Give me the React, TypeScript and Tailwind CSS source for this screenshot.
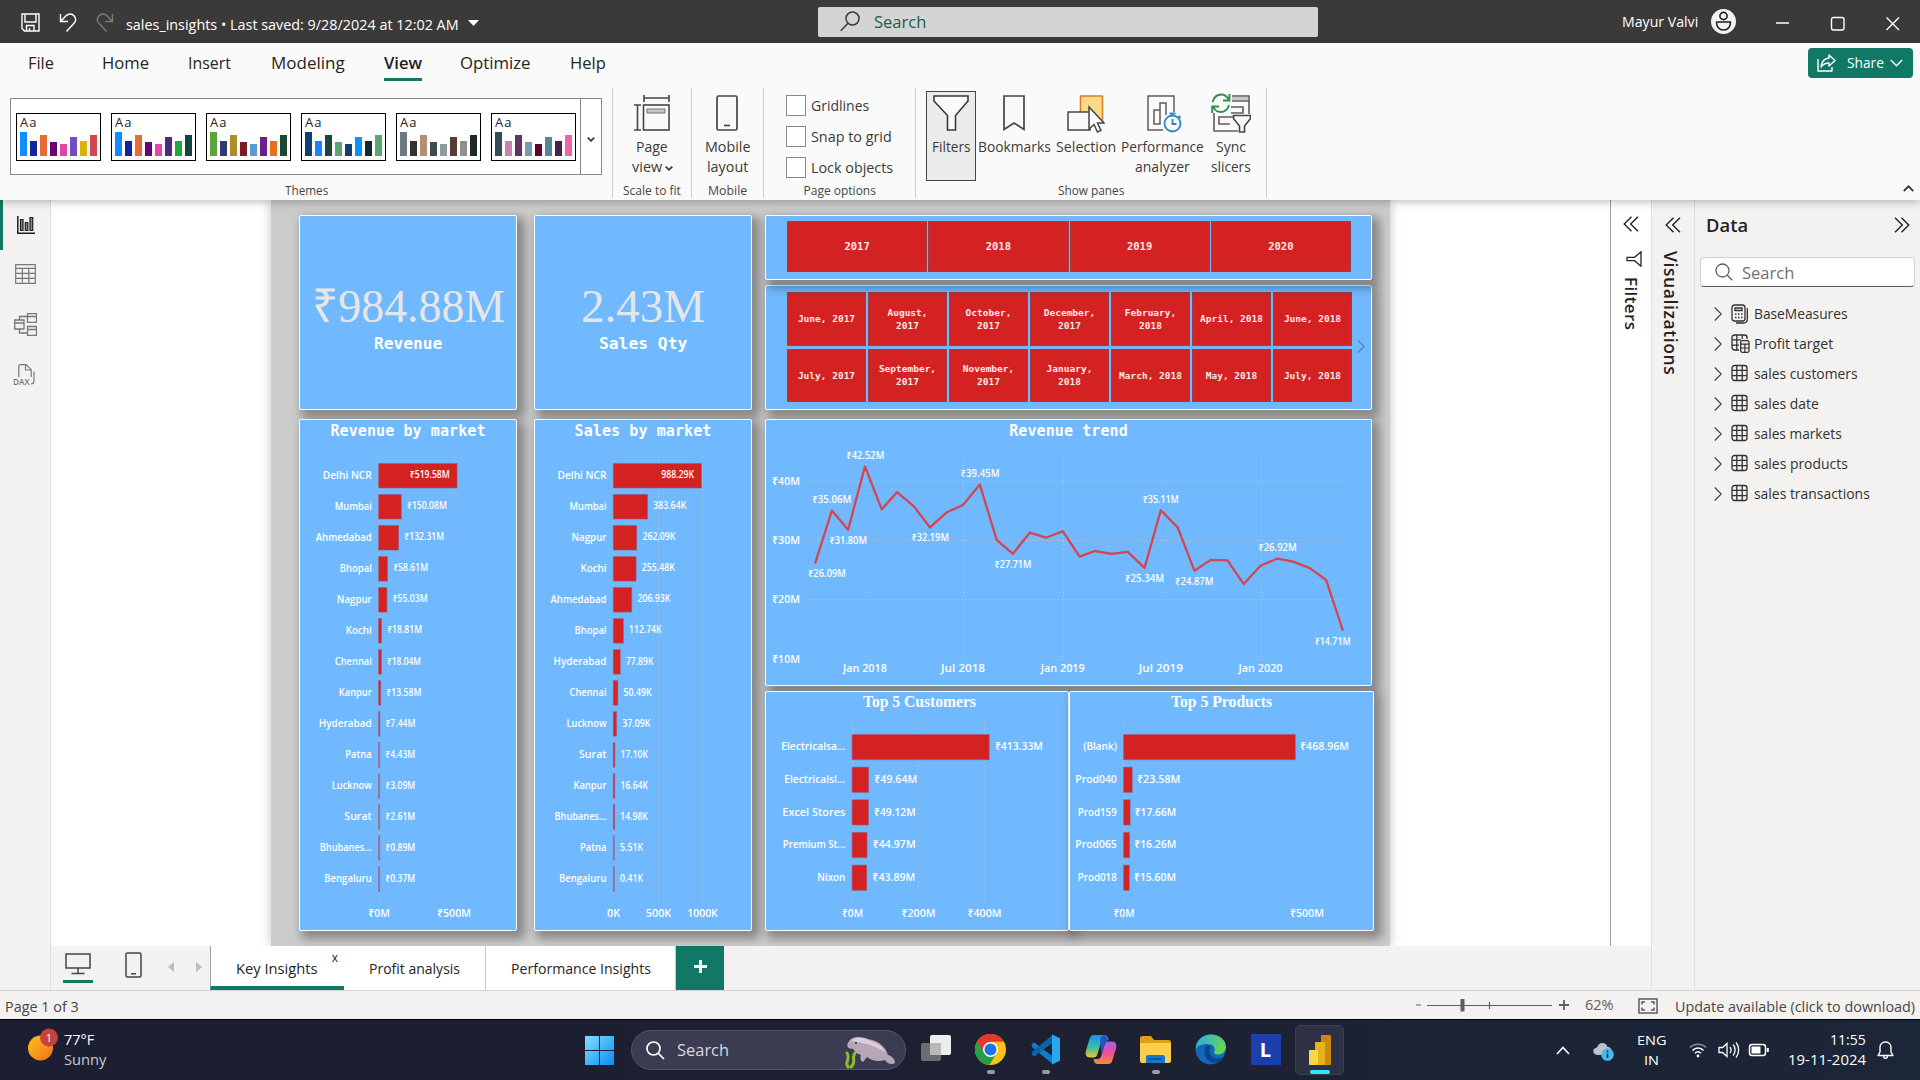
import { useLayoutEffect, useRef, useState, type ReactNode } from 'react';

/* Text that is condensed or widened to the width of its box. */
function Fit({ children, className = '' }: { children: ReactNode; className?: string }) {
  const outer = useRef<HTMLSpanElement>(null);
  const inner = useRef<HTMLSpanElement>(null);
  const [scale, setScale] = useState(1);
  useLayoutEffect(() => {
    if (outer.current && inner.current) {
      setScale(outer.current.clientWidth / inner.current.offsetWidth);
    }
  }, []);
  return (
    <span ref={outer} className={`block shrink-0 whitespace-nowrap ${className}`}>
      <span ref={inner} className="inline-block origin-left" style={{ transform: `scaleX(${scale})` }}>
        {children}
      </span>
    </span>
  );
}

/* ---------- title bar ---------- */

function TitleBar() {
  return (
    <header className="flex h-[43px] items-center bg-[#3b3a39] text-white">
      <svg className="ml-[21px] mt-[2px] shrink-0" width="19" height="19" viewBox="0 0 19 19" fill="none" stroke="#fff" strokeWidth="1.4">
        <path d="M1 1h17v17H3.5L1 15.500zM4 1v8h11V1M5.500 18v-5.500h7.500V18M8.500 15v3" />
      </svg>
      <svg className="ml-[19px] mt-[2px] shrink-0" width="18" height="20" viewBox="0 0 18 20" fill="none" stroke="#fff" strokeWidth="1.4">
        <path d="M1.500 1v7.500h7.500M1.800 8.200L7 2.700C9.500.3 13 .5 15 2.700s2 5.300 0 7.500L7.500 18.500" />
      </svg>
      <svg className="ml-[19px] mt-[2px] shrink-0" width="18" height="20" viewBox="0 0 18 20" fill="none" stroke="#7b7a79" strokeWidth="1.4">
        <path d="M16.500 1v7.500H9M16.200 8.200L11 2.700C8.500.3 5 .5 3 2.700s-2 5.300 0 7.500l7.500 8.300" />
      </svg>
      <Fit className="ml-[12px] mt-[6px] w-[333px] text-[14.5px]">sales_insights • Last saved: 9/28/2024 at 12:02 AM</Fit>
      <svg className="ml-[9px] mt-[3px] shrink-0" width="11" height="6" viewBox="0 0 11 6"><path d="M0 0h11L5.500 6z" fill="#fff" /></svg>
      <div className="ml-[339px] flex h-[30px] w-[500px] items-center rounded-[2px] bg-[#d4d4d2]">
        <svg className="ml-[22px]" width="20" height="21" viewBox="0 0 20 21" fill="none" stroke="#3b3a39" strokeWidth="1.500">
          <circle cx="12.500" cy="7.500" r="6.500" /><path d="M8 12.200L.8 19.800" />
        </svg>
        <Fit className="ml-[14px] mt-px w-[52px] text-[16.5px] text-[#1d5c50]">Search</Fit>
      </div>
      <Fit className="ml-[304px] mt-px w-[76px] text-[14.5px]">Mayur Valvi</Fit>
      <svg className="ml-[13px] shrink-0" width="25" height="25" viewBox="0 0 25 25">
        <circle cx="12.500" cy="12.500" r="12.500" fill="#f3f2f1" />
        <circle cx="12.500" cy="7" r="3.600" fill="none" stroke="#201f1e" strokeWidth="1.600" />
        <path d="M5.500 13h14c0 5-3 8-7 8s-7-3-7-8z" fill="none" stroke="#201f1e" strokeWidth="1.600" strokeLinejoin="round" />
      </svg>
      <svg className="ml-[40px] mt-[3px] shrink-0" width="124" height="15" viewBox="0 0 124 15" fill="none" stroke="#fff" strokeWidth="1.400">
        <path d="M0 7h13M110.500 1.500l12.500 12.500M123 1.500l-12.500 12.500" />
        <rect x="55.500" y="1.500" width="12.500" height="12.500" rx="2" />
      </svg>
    </header>
  );
}

/* ---------- ribbon ---------- */

const themeBars = ['h-[24px]', 'h-[15px]', 'h-[21px]', 'h-[14px]', 'h-[12px]', 'h-[19px]', 'h-[15px]', 'h-[21px]'];
const themes = [
  ['bg-[#118dff]', 'bg-[#12239e]', 'bg-[#e66c37]', 'bg-[#6b007b]', 'bg-[#e044a7]', 'bg-[#744ec2]', 'bg-[#d9b300]', 'bg-[#d64550]'],
  ['bg-[#118dff]', 'bg-[#12239e]', 'bg-[#e66c37]', 'bg-[#6b007b]', 'bg-[#e645ab]', 'bg-[#4c2c7a]', 'bg-[#1aab40]', 'bg-[#15433f]'],
  ['bg-[#5da33b]', 'bg-[#333a70]', 'bg-[#ad8f25]', 'bg-[#7b1c25]', 'bg-[#5b9bd5]', 'bg-[#6b1f8a]', 'bg-[#e8701a]', 'bg-[#1a4a30]'],
  ['bg-[#0f4070]', 'bg-[#1a85ff]', 'bg-[#1c4540]', 'bg-[#5aa772]', 'bg-[#11406f]', 'bg-[#0d93ff]', 'bg-[#0f2c2a]', 'bg-[#5aa772]'],
  ['bg-[#6b7a80]', 'bg-[#372f30]', 'bg-[#b48f74]', 'bg-[#404a4b]', 'bg-[#8c9ba0]', 'bg-[#5c3b34]', 'bg-[#938f8a]', 'bg-[#20292a]'],
  ['bg-[#364b5b]', 'bg-[#c983ac]', 'bg-[#613365]', 'bg-[#739cb9]', 'bg-[#63002e]', 'bg-[#5c839c]', 'bg-[#43224a]', 'bg-[#ee63ab]'],
];

function Tabs() {
  const tab = 'text-[17px] text-[#252423]';
  return (
    <nav className="flex h-[45px] items-start pt-[5px]">
      <Fit className={`ml-[28px] w-[26px] ${tab} mt-[2px]`}>File</Fit>
      <Fit className={`ml-[48px] w-[47px] ${tab} mt-[2px]`}>Home</Fit>
      <Fit className={`ml-[39px] w-[43px] ${tab} mt-[2px]`}>Insert</Fit>
      <Fit className={`ml-[40px] w-[74px] ${tab} mt-[2px]`}>Modeling</Fit>
      <div className="ml-[39px] mt-[2px] h-[31px] w-[38px] border-b-[3px] border-[#117865]">
        <Fit className="w-[38px] text-[17px] font-semibold text-[#201f1e]">View</Fit>
      </div>
      <Fit className={`ml-[38px] w-[71px] ${tab} mt-[2px]`}>Optimize</Fit>
      <Fit className={`ml-[39px] w-[36px] ${tab} mt-[2px]`}>Help</Fit>
      <div className="ml-auto mr-[7px] flex h-[30px] w-[105px] items-center rounded-[4px] bg-[#117865] text-white">
        <svg className="ml-[9px]" width="19" height="18" viewBox="0 0 19 18" fill="none" stroke="#fff" strokeWidth="1.400" strokeLinejoin="round">
          <path d="M1 5v12h14v-4" /><path d="M12 1l6 5.500-6 5.500V9c-3.500 0-6 1-8 4 .5-5 3.500-8.500 8-9z" />
        </svg>
        <Fit className="ml-[11px] w-[37px] text-[14.500px]">Share</Fit>
        <svg className="ml-[6px]" width="13" height="8" viewBox="0 0 13 8" fill="none" stroke="#fff" strokeWidth="1.400"><path d="M.8 1l5.700 5.700L12.200 1" /></svg>
      </div>
    </nav>
  );
}

function Group({ className, label, labelClass, children }: { className: string; label: string; labelClass: string; children: ReactNode }) {
  return (
    <div className={`flex h-[110px] shrink-0 flex-col items-center border-r border-[#d2d0ce] ${className}`}>
      <div className="flex h-[95px] flex-col items-center self-stretch">{children}</div>
      <Fit className={`h-[15px] text-[12px] leading-[16px] text-[#484644] ${labelClass}`}>{label}</Fit>
    </div>
  );
}

const cap = 'text-[14px] leading-[20px] text-[#3b3a39]';

function Check({ label, w }: { label: string; w: string }) {
  return (
    <div className="flex h-[31px] w-full items-start">
      <div className="h-[21px] w-[20px] border border-[#8a8886] bg-white" />
      <Fit className={`ml-[5px] mt-px ${cap} ${w}`}>{label}</Fit>
    </div>
  );
}

function Ribbon() {
  return (
    <section className="relative z-20 h-[157px] shrink-0 bg-[#fafafa] shadow-[0_2px_8px_rgba(0,0,0,0.25)]">
      <Tabs />
      <div className="flex">
        <Group className="w-[613px]" label="Themes" labelClass="w-[43px]">
          <div className="ml-[10px] mt-[10px] flex h-[77px] w-[592px] self-start border border-[#8a8886] bg-white">
            <div className="flex flex-1 items-center gap-[10px] pl-[5px]">
              {themes.map((colors, i) => (
                <div key={i} className="flex h-[48px] w-[85px] flex-col justify-between border border-black bg-white px-[3px] pb-[4px]">
                  <span className="h-[14px] text-[13px] leading-[17px] tracking-[1px] text-[#252423]">Aa</span>
                  <div className="flex items-end gap-[3px]">
                    {colors.map((c, j) => <div key={j} className={`w-[7px] ${themeBars[j]} ${c}`} />)}
                  </div>
                </div>
              ))}
            </div>
            <div className="flex w-[21px] items-center justify-center border-l border-[#8a8886] pt-[6px]">
              <svg width="8" height="5" viewBox="0 0 8 5" fill="none" stroke="#3b3a39" strokeWidth="1.800"><path d="M.7.700L4 3.800 7.300.7" /></svg>
            </div>
          </div>
        </Group>
        <Group className="w-[79px]" label="Scale to fit" labelClass="w-[58px]">
          <div className="mt-[7px] flex flex-col items-center">
            <svg width="36" height="36" viewBox="0 0 36 36" fill="none" stroke="#484644" strokeWidth="1.600">
              <path d="M10 3h25M10 0v7M35 0v7M0 10h7M0 35h7M3.500 10v25" /><rect x="9.500" y="10" width="25.500" height="25" />
              <rect x="13" y="14" width="18" height="4" fill="#c8c6c4" stroke="#797775" strokeWidth="1" />
            </svg>
            <Fit className={`mt-[6px] w-[32px] ${cap}`}>Page</Fit>
            <div className="flex items-center">
              <Fit className={`w-[30px] ${cap}`}>view</Fit>
              <svg className="ml-[3px] mt-[2px]" width="8" height="5" viewBox="0 0 8 5" fill="none" stroke="#3b3a39" strokeWidth="1.800"><path d="M.7.700L4 3.800 7.300.7" /></svg>
            </div>
          </div>
        </Group>
        <Group className="w-[72px]" label="Mobile" labelClass="w-[39px]">
          <div className="mt-[7px] flex flex-col items-center">
            <svg className="-ml-[2px]" width="22" height="36" viewBox="0 0 22 36" fill="none" stroke="#484644" strokeWidth="1.700"><rect x="1" y="1" width="20" height="34" rx="1.500" /><path d="M8 30.500h6" /></svg>
            <Fit className={`mt-[6px] w-[46px] ${cap}`}>Mobile</Fit>
            <Fit className={`w-[41px] ${cap}`}>layout</Fit>
          </div>
        </Group>
        <Group className="w-[152px]" label="Page options" labelClass="w-[72px]">
          <div className="ml-[22px] mt-[7px] self-stretch">
            <Check label="Gridlines" w="w-[58px]" />
            <Check label="Snap to grid" w="w-[81px]" />
            <Check label="Lock objects" w="w-[82px]" />
          </div>
        </Group>
        <Group className="w-[351px]" label="Show panes" labelClass="w-[66px]">
          <div className="flex self-stretch">
            <div className="ml-[10px] mt-[3px] flex h-[90px] w-[50px] flex-col items-center border border-[#484644] bg-[#ebebeb] pt-[3px]">
              <svg width="36" height="36" viewBox="0 0 36 36" fill="#fafafa" stroke="#3b3a39" strokeWidth="1.600"><path d="M1 1h34v5L22.500 20.500V35h-8V20.500L1 6z" /></svg>
              <Fit className={`mt-[6px] w-[39px] ${cap}`}>Filters</Fit>
            </div>
            <div className="ml-[2px] mt-[7px] flex w-[73px] flex-col items-center">
              <svg className="-ml-[2px]" width="22" height="36" viewBox="0 0 22 36" fill="none" stroke="#484644" strokeWidth="1.700"><path d="M1 1h20v33.500L11 28 1 34.500z" /></svg>
              <Fit className={`mt-[6px] w-[73px] ${cap}`}>Bookmarks</Fit>
            </div>
            <div className="ml-[5px] mt-[7px] flex w-[60px] flex-col items-center">
              <svg width="38" height="38" viewBox="0 0 38 38" fill="none" strokeWidth="1.500">
                <rect x="13.500" y="1" width="22" height="25" fill="#fbd98b" stroke="#d67f20" />
                <rect x="1" y="17" width="22" height="18" fill="#fafafa" stroke="#484644" />
                <path d="M22 12v22l5-4.500 3.500 7.500 3.500-1.600-3.500-7.400h6.500z" fill="#fff" stroke="#484644" />
              </svg>
              <Fit className={`mt-[4px] w-[60px] ${cap}`}>Selection</Fit>
            </div>
            <div className="ml-[5px] mt-[7px] flex w-[83px] flex-col items-center">
              <svg className="ml-[3px]" width="35" height="38" viewBox="0 0 35 38" fill="none" strokeWidth="1.500" stroke="#605e5c">
                <path d="M16 35H1V1h26v16" /><path d="M7 29V15h6v14zM13 29V8h6v12" />
                <circle cx="25.500" cy="28.500" r="8" fill="#fafafa" stroke="#2b88c8" strokeWidth="1.800" />
                <path d="M25.500 24v5h4M22.500 18.500h6M25.500 18.500v2M31.500 21l2 2" stroke="#2b88c8" strokeWidth="1.800" />
              </svg>
              <Fit className={`mt-[4px] w-[83px] ${cap}`}>Performance</Fit>
              <Fit className={`w-[55px] ${cap}`}>analyzer</Fit>
            </div>
            <div className="ml-[7px] mt-[5px] flex w-[40px] flex-col items-center">
              <svg width="40" height="40" viewBox="0 0 40 40" fill="none" strokeWidth="1.600" stroke="#605e5c">
                <path d="M21 3h17v18M21 8h17M20 14h12v6H20M3 20v18h24M19 31H8v-7h14" />
                <path d="M21 4h16v3H21z" fill="#c8c6c4" stroke="none" />
                <path d="M22.500 22.500h17v3l-6 7.500V39h-5v-6l-6-7.500z" fill="#fafafa" stroke="#484644" />
                <path d="M1.500 9C3 3.500 7 1.500 10.500 1.500S16 3.500 18 7M18.500 1v6.500H12M18 12c-1.500 5-5 7-8.500 7S3.500 17 2 13.500M1.200 20v-6.500H8" stroke="#2f8f4e" strokeWidth="1.900" />
              </svg>
              <Fit className={`mt-[4px] w-[30px] ${cap}`}>Sync</Fit>
              <Fit className={`w-[40px] ${cap}`}>slicers</Fit>
            </div>
          </div>
        </Group>
        <svg className="ml-auto mr-[6px] mt-[97px]" width="11" height="7" viewBox="0 0 11 7" fill="none" stroke="#3b3a39" strokeWidth="1.800"><path d="M.8 6l4.700-4.700L10.200 6" /></svg>
      </div>
    </section>
  );
}

/* ---------- report canvas ---------- */

type TextProps = { x: number; y: number; w: number; size?: number; anchor?: 'start' | 'middle' | 'end'; children: string };

function Label({ x, y, w, size = 11, anchor = 'start', children }: TextProps) {
  return (
    <text x={x} y={y + size * 0.35} fontSize={size} textAnchor={anchor} textLength={w} lengthAdjust="spacingAndGlyphs" fill="#fff" fontWeight="600">
      {children}
    </text>
  );
}

type Row = [name: string, nameWidth: number, label: string, labelWidth: number, value: number];
type BarChartProps = {
  viewBox: string; w: number; h: number; rows: Row[]; x0: number; unit: number; top: number; pitch: number; barHeight: number;
  ticks: [x: number, label: string, width: number][]; gridTop: number; valueSize: number; inside?: boolean; gap?: number;
};

function BarChart({ viewBox, w, h, rows, x0, unit, top, pitch, barHeight, ticks, gridTop, valueSize, inside, gap = 6 }: BarChartProps) {
  return (
    <svg width={w} height={h} viewBox={viewBox} className="block">
      {ticks.map(([x]) => <path key={x} d={`M${x} ${gridTop}V905`} stroke="#b9c6d6" strokeWidth="1" strokeDasharray="1 3" />)}
      {rows.map(([name, nameWidth, label, labelWidth, value], i) => {
        const y = top + i * pitch;
        const bw = Math.max(value * unit, 1);
        const within = inside && i === 0;
        return (
          <g key={name}>
            <rect x={x0 + 0.300} y={y + 0.500} width={bw} height={barHeight} fill="#d42121" fillOpacity={value * unit < 1 ? 0.45 : 1} stroke="#a05a78" strokeOpacity="0.600" strokeWidth="1" />
            <Label x={x0 - 6.500} y={y + barHeight / 2} w={nameWidth} anchor="end">{name}</Label>
            <Label x={within ? x0 + bw - gap - 1 : x0 + bw + gap} y={y + barHeight / 2 - 0.3} w={labelWidth} size={valueSize} anchor={within ? 'end' : 'start'}>{label}</Label>
          </g>
        );
      })}
      {ticks.map(([x, label, width]) => <Label key={label} x={x} y={913} w={width} size={11.500} anchor="middle">{label}</Label>)}
    </svg>
  );
}

const revenueRows: Row[] = [
  ['Delhi NCR', 49, '₹519.58M', 40, 519.58], ['Mumbai', 37, '₹150.08M', 40, 150.08], ['Ahmedabad', 56, '₹132.31M', 40, 132.31],
  ['Bhopal', 32, '₹58.61M', 35, 58.61], ['Nagpur', 35, '₹55.03M', 35, 55.03], ['Kochi', 26, '₹18.81M', 35, 18.81],
  ['Chennai', 37, '₹18.04M', 34, 18.04], ['Kanpur', 33, '₹13.58M', 35, 13.58], ['Hyderabad', 53, '₹7.44M', 30, 7.44],
  ['Patna', 26.5, '₹4.43M', 30, 4.43], ['Lucknow', 40, '₹3.09M', 30, 3.09], ['Surat', 27.5, '₹2.61M', 30, 2.61],
  ['Bhubanes...', 52, '₹0.89M', 30, 0.89], ['Bengaluru', 47.5, '₹0.37M', 30, 0.37],
];
const salesRows: Row[] = [
  ['Delhi NCR', 49, '988.29K', 33, 988.29], ['Mumbai', 37, '383.64K', 33, 383.64], ['Nagpur', 35, '262.09K', 33, 262.09],
  ['Kochi', 26, '255.48K', 33, 255.48], ['Ahmedabad', 56, '206.93K', 33, 206.93], ['Bhopal', 32, '112.74K', 32.5, 112.74],
  ['Hyderabad', 53, '77.89K', 27.5, 77.89], ['Chennai', 37, '50.49K', 28, 50.49], ['Lucknow', 40, '37.09K', 28, 37.09],
  ['Surat', 27.5, '17.10K', 27.5, 17.1], ['Kanpur', 33, '16.64K', 27.5, 16.64], ['Bhubanes...', 52, '14.98K', 27.5, 14.98],
  ['Patna', 26.5, '5.51K', 23, 5.51], ['Bengaluru', 47.5, '0.41K', 23, 0.41],
];
const customerRows: Row[] = [
  ['Electricalsa...', 64, '₹413.33M', 48, 413.33], ['Electricalsl...', 61, '₹49.64M', 43, 49.64], ['Excel Stores', 63, '₹49.12M', 41.5, 49.12],
  ['Premium St...', 62.5, '₹44.97M', 43, 44.97], ['Nixon', 28, '₹43.89M', 43, 43.89],
];
const productRows: Row[] = [
  ['(Blank)', 33.5, '₹468.96M', 49, 468.96], ['Prod040', 41.5, '₹23.58M', 43.5, 23.58], ['Prod159', 39, '₹17.66M', 41.5, 17.66],
  ['Prod065', 41.5, '₹16.26M', 42, 16.26], ['Prod018', 39, '₹15.60M', 42, 15.6],
];

const trend = [
  26.09, 35.06, 31.8, 42.52, 35.25, 38.15, 35.8, 32.19, 34.75, 36, 39.45, 30.1, 27.71, 31.3, 30.45, 31.55, 27.25, 28.2, 27.7, 28.05, 25.34,
  35.11, 32.2, 24.87, 26.7, 26.6, 22.6, 25.7, 26.92, 26.4, 25.3, 23.3, 14.71,
];
const trendX = (month: number) => 815.1 + ((Date.UTC(2017, 9 + month, 1) - Date.UTC(2017, 9, 1)) / 86400000) * 0.5419;
const trendY = (v: number) => 481.3 + (40 - v) * 5.907;

function TrendChart() {
  const labels: [number, number, string, number][] = [
    [827, 573.7, '₹26.09M', 38], [831.8, 499.700, '₹35.06M', 39], [848.2, 540.700, '₹31.80M', 37.5], [865.300, 455.700, '₹42.52M', 38],
    [930.200, 537.700, '₹32.19M', 37.5], [980, 473.700, '₹39.45M', 39], [1013, 564.700, '₹27.71M', 37], [1144.500, 579, '₹25.34M', 39],
    [1160.800, 499.700, '₹35.11M', 36], [1194.300, 581.700, '₹24.87M', 38.500], [1277.500, 547.700, '₹26.92M', 38.500], [1332.700, 641.700, '₹14.71M', 36],
  ];
  const months: [number, string][] = [[3, 'Jan 2018'], [9, 'Jul 2018'], [15, 'Jan 2019'], [21, 'Jul 2019'], [27, 'Jan 2020']];
  return (
    <svg width="605" height="236" viewBox="766 449 605 236" className="block">
      {[40, 30, 20, 10].map((v) => (
        <g key={v}>
          <path d={`M806 ${Math.round(trendY(v)) + 0.5}H1350`} stroke="#b9c6d6" strokeDasharray="1 3" />
          <Label x={800} y={trendY(v)} w={28} size={11.500} anchor="end">{`₹${v}M`}</Label>
        </g>
      ))}
      {months.map(([m, label]) => (
        <g key={m}>
          <path d={`M${Math.round(trendX(m)) + 0.5} 452V659`} stroke="#b9c6d6" strokeDasharray="1 3" />
          <Label x={trendX(m)} y={668} w={44} size={11.500} anchor="middle">{label}</Label>
        </g>
      ))}
      <polyline points={trend.map((v, i) => `${trendX(i)},${trendY(v)}`).join(' ')} fill="none" stroke="#d8434f" strokeWidth="2.300" strokeLinejoin="round" />
      {labels.map(([x, y, label, w]) => <Label key={label} x={x} y={y} w={w} size={9.800} anchor="middle">{label}</Label>)}
    </svg>
  );
}

const card = 'rounded-[2px] border border-white bg-[#70b9ff] shadow-[5px_5px_10px_3px_rgba(0,0,0,0.33)]';
const monoTitle = 'h-[29px] text-center font-["DejaVu_Sans_Mono",monospace] text-[15px] font-bold leading-[22px] tracking-[0.1px] text-white';

function Metric({ value, label, valueWidth, labelWidth }: { value: string; label: string; valueWidth: string; labelWidth: string }) {
  return (
    <div className={`flex h-[195px] w-[218px] flex-col items-center ${card}`}>
      <Fit className={`mt-[65px] h-[50px] font-["Liberation_Serif",serif] text-[47px] leading-[50px] text-[#e6e6e6] ${valueWidth}`}>{value}</Fit>
      <Fit className={`mt-[3px] font-["DejaVu_Sans_Mono",monospace] text-[15px] font-bold leading-[20px] text-white ${labelWidth}`}>{label}</Fit>
    </div>
  );
}

const tile = 'flex items-center justify-center border border-[#93414f] bg-[#d42121] text-center font-["DejaVu_Sans_Mono",monospace] font-bold text-[#fbe9e9]';

const slicerMonths = [
  'June, 2017', 'August,|2017', 'October,|2017', 'December,|2017', 'February,|2018', 'April, 2018', 'June, 2018',
  'July, 2017', 'September,|2017', 'November,|2017', 'January,|2018', 'March, 2018', 'May, 2018', 'July, 2018',
];

function ReportPage() {
  return (
    <div className="flex h-[746px] w-[1119px] overflow-hidden bg-[#cbcbcb] pl-[28px] pt-[15px]">
      <div className="flex w-[218px] flex-col gap-[9px]">
        <Metric value="₹984.88M" label="Revenue" valueWidth="w-[193px]" labelWidth="w-[68px]" />
        <div className={`h-[512px] ${card}`}>
          <h3 className={monoTitle}>Revenue by market</h3>
          <BarChart viewBox="300 449.500 216 481" w={216} h={481} rows={revenueRows} x0={378.300} unit={0.151} top={463.500} pitch={31.020} barHeight={24.500}
            ticks={[[379, '₹0M', 21.5], [454, '₹500M', 34]]} gridTop={453} valueSize={9.800} inside />
        </div>
      </div>
      <div className="ml-[17px] flex w-[218px] flex-col gap-[9px]">
        <Metric value="2.43M" label="Sales Qty" valueWidth="w-[124px]" labelWidth="w-[88px]" />
        <div className={`h-[512px] ${card}`}>
          <h3 className={monoTitle}>Sales by market</h3>
          <BarChart viewBox="535 449.500 216 481" w={216} h={481} rows={salesRows} x0={613} unit={0.0892} top={463.500} pitch={31.020} barHeight={24.500}
            ticks={[[613.500, '0K', 13], [658.500, '500K', 25.500], [702.500, '1000K', 30.500]]} gridTop={453} valueSize={9.800} inside />
        </div>
      </div>
      <div className="ml-[13px] flex w-[609px] flex-col">
        <div className={`relative z-10 flex h-[65px] w-[607px] gap-px pb-[7px] pl-[21px] pr-[20px] pt-[5px] ${card}`}>
          {['2017', '2018', '2019', '2020'].map((y) => <div key={y} className={`flex-1 text-[10.500px] ${tile}`}>{y}</div>)}
        </div>
        <div className={`mt-[5px] flex h-[125px] w-[607px] items-start pl-[21px] pt-[6px] ${card}`}>
          <div className="grid h-[110px] w-[565px] grid-cols-7 grid-rows-2 gap-x-[2px] gap-y-[3px]">
            {slicerMonths.map((m) => (
              <div key={m} className={`text-[9.500px] leading-[13px] ${tile}`}>
                <span>{m.split('|').map((line) => <span key={line} className="block whitespace-nowrap">{line}</span>)}</span>
              </div>
            ))}
          </div>
          <svg className="ml-[5px] mt-[48px]" width="8" height="13" viewBox="0 0 8 13" fill="none" stroke="#5b7fa6" strokeWidth="1.100"><path d="M1 .5l6 6-6 6" /></svg>
        </div>
        <div className={`mt-[9px] h-[267px] w-[607px] ${card}`}>
          <h3 className={monoTitle}>Revenue trend</h3>
          <TrendChart />
        </div>
        <div className="mt-[5px] flex h-[240px]">
          <div className={`w-[304px] ${card}`}>
            <Fit className='ml-[97px] h-[28px] w-[113px] font-["Liberation_Serif",serif] text-[16px] font-bold leading-[20px] text-white'>Top 5 Customers</Fit>
            <BarChart viewBox="766 720 302 210" w={302} h={210} rows={customerRows} x0={851.800} unit={0.3317} top={734} pitch={32.650} barHeight={25.200}
              ticks={[[852.5, '₹0M', 21], [918.5, '₹200M', 34], [984.5, '₹400M', 34]]} gridTop={721} valueSize={11.500} />
          </div>
          <div className={`w-[305px] ${card}`}>
            <Fit className='mx-auto h-[28px] w-[101px] font-["Liberation_Serif",serif] text-[16px] font-bold leading-[20px] text-white'>Top 5 Products</Fit>
            <BarChart viewBox="1070 720 303 210" w={303} h={210} rows={productRows} x0={1123.300} unit={0.3662} top={734} pitch={32.650} barHeight={25.200}
              ticks={[[1124, '₹0M', 21], [1307, '₹500M', 34]]} gridTop={721} valueSize={11.500} gap={5} />
          </div>
        </div>
      </div>
    </div>
  );
}

/* ---------- side areas ---------- */

function LeftRail() {
  return (
    <aside className="h-[790px] w-[51px] border-r border-[#e1dfdd] bg-[#f3f2f1]">
      <div className="h-[50px] border-l-[3px] border-[#117865] pl-[14px] pt-[16px]">
        <svg width="18" height="18" viewBox="0 0 18 18" fill="#8a8886" stroke="#201f1e" strokeWidth="1.200"><path d="M.8 0v17.200H18" fill="none" strokeWidth="1.500" /><path d="M3.500 3.500h2.500v11H3.500zM8.300 6.500h2.500v8H8.300zM13 1.500h2.700v13H13z" /></svg>
      </div>
      <div className="flex flex-col pl-[12px] text-[#797775]">
        <svg className="ml-[3px] mt-[14px]" width="21" height="20" viewBox="0 0 21 20" fill="none" stroke="currentColor" strokeWidth="1.200"><path d="M.7.700h19.600v18.600H.700zM.700 4.300h19.600M.700 9.300h19.600M.700 14.300h19.600M7.300 4.300v15M13.800 4.300v15" /></svg>
        <svg className="ml-[2px] mt-[29px]" width="23" height="23" viewBox="0 0 23 23" fill="none" stroke="currentColor" strokeWidth="1.300"><path d="M.700 7h9.300v9H.700zM.700 10h9.300M13.500.700h9v8.600h-9zM13.500 3.500h9M13.500 13.500h9v9h-9zM13.500 16.500h9M5.500 7V3.500h8M5.500 16v4h8" /></svg>
        <svg className="mt-[28px]" width="25" height="25" viewBox="0 0 25 25" fill="none" stroke="currentColor" strokeWidth="1.200">
          <path d="M6.800 13V2.200C6.800 1.200 7.300.700 8.200.700h6l5 5V13M13.500.700V6h5.500M22 7.500v9.500c0 2-1 3-3 3" />
          <text x="1" y="20.500" fontSize="8.500" fontWeight="600" fill="currentColor" stroke="none" textLength="16.500" lengthAdjust="spacingAndGlyphs">DAX</text>
        </svg>
      </div>
    </aside>
  );
}

const tables: [string, string, 'calc' | 'calcTable' | 'table'][] = [
  ['BaseMeasures', 'w-[94px]', 'calc'], ['Profit target', 'w-[79px]', 'calcTable'], ['sales customers', 'w-[104px]', 'table'], ['sales date', 'w-[65px]', 'table'],
  ['sales markets', 'w-[88px]', 'table'], ['sales products', 'w-[94px]', 'table'], ['sales transactions', 'w-[116px]', 'table'],
];

function TableIcon({ kind }: { kind: 'calc' | 'calcTable' | 'table' }) {
  return (
    <svg width="19" height="20" viewBox="0 0 19 20" fill="none" stroke="#323130" strokeWidth="1.300">
      {kind === 'calc' && (
        <>
          <rect x="1" y="1" width="13" height="16" rx="2.500" /><path d="M16.300 4v11c0 2.500-1.500 4-4 4H5M4 4h7v2.500H4z" />
          <path d="M4 10h1.500M7 10h1.500M10 10h1.500M4 13.500h1.500M7 13.500h1.500M10 13.500h1.500" strokeWidth="1.700" />
        </>
      )}
      {kind === 'table' && <><rect x="1" y="1.500" width="15" height="15" rx="2.500" /><path d="M5.800 1.500v15M11.200 1.500v15M1 6.300h15M1 11.700h15" /></>}
      {kind === 'calcTable' && (
        <>
          <path d="M8 16H3.500C2 16 1 15 1 13.500v-10C1 2 2 1 3.500 1h10C15 1 16 2 16 3.500V5M5.800 1v15M11.200 1v4M1 5.800h9M1 11.200h7" />
          <rect x="9.700" y="6.700" width="8.300" height="11.600" rx="1.500" fill="#f3f2f1" /><path d="M9.700 10.200h8.300M9.700 14h8.300M13.900 10v8" strokeWidth="1.200" />
        </>
      )}
    </svg>
  );
}

const Chevrons = ({ flip = false }: { flip?: boolean }) => (
  <svg width="16" height="16" viewBox="0 0 16 16" fill="none" stroke="#252423" strokeWidth="1.400" className={flip ? '-scale-x-100' : ''}>
    <path d="M8.500.7L1.200 8l7.300 7.300M15 .7L7.700 8l7.300 7.300" />
  </svg>
);

function DataPane() {
  return (
    <aside className="h-[790px] w-[226px] border-l border-[#e1dfdd] bg-[#f3f2f1]">
      <div className="flex h-[50px] items-center pl-[11px] pr-[10px]">
        <Fit className="w-[42px] text-[17.500px] font-semibold text-[#252423]">Data</Fit>
        <div className="ml-auto"><Chevrons flip /></div>
      </div>
      <div className="ml-[5px] mt-[7px] flex h-[30px] w-[215px] items-center rounded-[4px] border border-b-[#605e5c] border-[#d1d1d1] bg-white">
        <svg className="ml-[14px]" width="18" height="18" viewBox="0 0 18 18" fill="none" stroke="#605e5c" strokeWidth="1.300"><circle cx="7.500" cy="7.500" r="6.500" /><path d="M12.300 12.300L17.300 17.300" /></svg>
        <Fit className="ml-[9px] mt-[3px] w-[52px] text-[16.500px] text-[#707070]">Search</Fit>
      </div>
      <ul className="mt-[12px]">
        {tables.map(([name, w, kind]) => (
          <li key={name} className="flex h-[30px] items-center pl-[19px]">
            <svg width="8" height="14" viewBox="0 0 8 14" fill="none" stroke="#484644" strokeWidth="1.200"><path d="M.8.500L7.200 7 .8 13.500" /></svg>
            <div className="ml-[9px]"><TableIcon kind={kind} /></div>
            <Fit className={`ml-[4px] text-[14.500px] text-[#323130] ${w}`}>{name}</Fit>
          </li>
        ))}
      </ul>
    </aside>
  );
}

function PageTabs() {
  const tab = 'text-[14px] text-[#252423]';
  return (
    <div className="flex h-[44px] bg-[#f3f2f1]">
      <div className="ml-[12px] flex h-[37px] w-[30px] flex-col items-center justify-between border-b-[3px] border-[#117865] pt-[7px]">
        <svg width="26" height="22" viewBox="0 0 26 22" fill="none" stroke="#484644" strokeWidth="1.500"><path d="M1 1h24v14H1zM13 15v5M6.500 20.500h13" /></svg>
      </div>
      <svg className="ml-[32px] mt-[6px]" width="17" height="26" viewBox="0 0 17 26" fill="none" stroke="#484644" strokeWidth="1.500"><rect x="1" y="1" width="15" height="24" rx="1.500" /><path d="M6 21.800h5" /></svg>
      <svg className="ml-[26px] mt-[16px]" width="34" height="10" viewBox="0 0 34 10" fill="#bebbb8"><path d="M6 0v10L0 5zM28 0v10l6-5z" /></svg>
      <div className="relative ml-[8px] flex w-[134px] justify-center border-b-[4px] border-l border-b-[#117865] border-l-[#a19f9d] bg-white pr-[2px] pt-[12px]">
        <Fit className={`w-[82px] font-medium ${tab}`}>Key Insights</Fit>
        <span className="absolute right-[6px] top-[3px] text-[12px] leading-[18px] text-[#252423]">x</span>
      </div>
      <div className="flex w-[142px] justify-center border-r border-[#c8c6c4] bg-white pt-[12px]"><Fit className={`w-[91px] ${tab}`}>Profit analysis</Fit></div>
      <div className="flex w-[190px] justify-center border-r border-[#c8c6c4] bg-white pt-[12px]"><Fit className={`w-[140px] ${tab}`}>Performance Insights</Fit></div>
      <div className="flex w-[48px] items-center justify-center bg-[#117865] pb-[3px]">
        <svg width="13" height="13" viewBox="0 0 13 13" stroke="#fff" strokeWidth="3"><path d="M6.500 0v13M0 6.500h13" /></svg>
      </div>
    </div>
  );
}

function StatusBar() {
  return (
    <footer className="flex h-[29px] shrink-0 items-center border-t border-[#d6d4d2] bg-[#f3f2f1] pt-[2px] text-[#484644]">
      <Fit className="ml-[5px] w-[74px] text-[14px]">Page 1 of 3</Fit>
      <svg className="-mt-[3px] ml-[1337px] shrink-0" width="153" height="14" viewBox="0 0 153 14" stroke="#605e5c" strokeWidth="1.500">
        <path d="M0 7h5M11 7.500h125M73.500 4v7" strokeWidth="1.200" /><path d="M46.500 1v12.500" strokeWidth="4" /><path d="M143 7h10M148 2v10" strokeWidth="1.800" />
      </svg>
      <Fit className="-mt-[3px] ml-[16px] w-[29px] text-[14px] text-[#605e5c]">62%</Fit>
      <svg className="ml-[24px] shrink-0" width="20" height="16" viewBox="0 0 20 16" fill="none" stroke="#605e5c" strokeWidth="1.500"><rect x="1" y="1" width="18" height="14" /><path d="M4 6.500V4h3M13 4h3v2.500M16 9.500V12h-3M7 12H4V9.500" /></svg>
      <Fit className="ml-[17px] w-[240px] text-[14px]">Update available (click to download)</Fit>
    </footer>
  );
}

/* ---------- taskbar ---------- */

const Dot = ({ show }: { show: boolean }) => <div className={`h-[4px] w-[8px] rounded-full ${show ? 'bg-[#9a9ca3]' : ''}`} />;

function AppSlot({ children, dot = false }: { children: ReactNode; dot?: boolean }) {
  return <div className="flex w-[55px] shrink-0 flex-col items-center gap-[5px] pt-[14px]">{children}<Dot show={dot} /></div>;
}

function Taskbar() {
  return (
    <div className="flex h-[61px] shrink-0 items-start border-t border-black bg-gradient-to-r from-[#1c1f33] via-[#1d2031] to-[#1b2638] text-white">
      <svg className="ml-[27px] mt-[8px] shrink-0" width="32" height="36" viewBox="0 0 32 36">
        <defs><linearGradient id="sun" x1="0" y1="0" x2="1" y2="1"><stop offset="0" stopColor="#ffc21a" /><stop offset="1" stopColor="#f0701a" /></linearGradient></defs>
        <circle cx="13.500" cy="20" r="12.500" fill="url(#sun)" /><circle cx="22" cy="9.500" r="9" fill="#c8423c" />
        <text x="22" y="13.500" fontSize="11" textAnchor="middle" fill="#fff">1</text>
      </svg>
      <div className="ml-[5px] mt-[10px]">
        <Fit className="w-[30px] text-[14px] leading-[20px]">77°F</Fit>
        <Fit className="w-[42px] text-[14px] leading-[20px] text-[#c8cad0]">Sunny</Fit>
      </div>
      <svg className="ml-[479px] mt-[16px] shrink-0" width="29" height="29" viewBox="0 0 29 29">
        <defs><linearGradient id="win" x1="0" y1="0" x2="1" y2="1"><stop offset="0" stopColor="#7fe0ff" /><stop offset="1" stopColor="#0a8cf0" /></linearGradient></defs>
        <path d="M0 0h14v14H0zM15 0h14v14H15zM0 15h14v14H0zM15 15h14v14H15z" fill="url(#win)" />
      </svg>
      <div className="ml-[17px] mt-[10px] flex h-[40px] w-[275px] shrink-0 items-center rounded-full border border-[#51536a] bg-[#3b3c51]">
        <svg className="ml-[14px]" width="19" height="19" viewBox="0 0 19 19" fill="none" stroke="#fff" strokeWidth="1.700"><circle cx="7.500" cy="7.500" r="6.500" /><path d="M12.300 12.300l5.700 5.700" /></svg>
        <Fit className="ml-[12px] mt-[2px] w-[52px] text-[15.500px] text-[#d8d9e0]">Search</Fit>
        <svg className="ml-[114px] mt-[3px]" width="54" height="34" viewBox="0 0 54 34">
          <path d="M5 32C1 27 8 24 4 18M8 32c6-5 0-9 4-14" stroke="#8dbd2c" strokeWidth="3" fill="none" strokeLinecap="round" />
          <path d="M5 8C8 1 17 1 25 4c12 2 18 9 20 16 4 1 7 4 7 8-3 2-8 1-10-3-7 2-13 1-18-3l-4 5c-3-1-3-5-2-7-4-1-6-3-8-6-5 0-7-3-5-6z" fill="#b7a6b8" />
          <path d="M8 6c4-4 10-4 17-1 10 3 15 7 18 13-10-7-20-10-35-12z" fill="#dccfdb" /><circle cx="13" cy="8" r="1" fill="#333" />
        </svg>
      </div>
      <div className="ml-[2px] flex h-[60px]">
        <AppSlot><svg width="30" height="30" viewBox="0 0 30 30"><rect x="9" y="1" width="21" height="20" rx="2" fill="#eceded" /><rect y="9" width="20" height="18" rx="2" fill="#6b6c70" /><path d="M9 9h11v12H9z" fill="#b8b9bb" /></svg></AppSlot>
        <AppSlot dot>
          <svg width="31" height="31" viewBox="0 0 30 30">
            <circle cx="15" cy="15" r="15" fill="#fbc116" /><path d="M2 7.500A15 15 0 0128 7.500H15L8.500 18.800z" fill="#e5372c" /><path d="M2 7.500A15 15 0 0014 30l7-11.500H9z" fill="#23a047" />
            <circle cx="15" cy="15" r="7.300" fill="#fff" /><circle cx="15" cy="15" r="5.800" fill="#1a73e8" />
          </svg>
        </AppSlot>
        <AppSlot dot>
          <svg width="31" height="31" viewBox="0 0 31 31"><path d="M1.500 10.500L4 8.300l18.500 14V30L2 13z" fill="#0f7ccb" /><path d="M1.500 20.500L4 22.700l18.500-14V1L2 18z" fill="#0a63ab" /><path d="M22 .500l8 3.800v22.400l-8 3.800z" fill="#2aa5f0" /></svg>
        </AppSlot>
        <AppSlot>
          <svg width="32" height="31" viewBox="0 0 32 31">
            <defs>
              <linearGradient id="cpA" x1="0" y1="0" x2="0" y2="1"><stop offset="0" stopColor="#1e8ff0" /><stop offset=".55" stopColor="#35c2a0" /><stop offset="1" stopColor="#f2c52b" /></linearGradient>
              <linearGradient id="cpB" x1="0" y1="0" x2="0" y2="1"><stop offset="0" stopColor="#a55bf0" /><stop offset=".5" stopColor="#ef4d9a" /><stop offset="1" stopColor="#f88a3a" /></linearGradient>
            </defs>
            <path d="M9 1h10c3 0 4 2 4.500 5h-4c-2.500 0-3.500 2-4 4l-3 10c-.8 2.500-2 3.500-4 3.500H5c-4 0-5-3-4-7L4.500 5C5.300 2.500 6.500 1 9 1z" fill="url(#cpA)" />
            <path d="M23 30H13c-3 0-4-2-4.500-5h4c2.500 0 3.500-2 4-4l3-10c.8-2.500 2-3.500 4-3.500H27c4 0 5 3 4 7l-3.500 11.500c-.8 2.500-2 4-4.500 4z" fill="url(#cpB)" />
            <path d="M18 1c3 0 4 2 5 6.500-2 0-3 1-3.500 3l-3 10C16 8 13 5 18 1z" fill="#2356c5" />
          </svg>
        </AppSlot>
        <AppSlot dot>
          <svg width="31" height="31" viewBox="0 0 31 31"><path d="M0 4c0-1 1-2 2-2h9l3 4h15c1 0 2 1 2 2v4H0z" fill="#e0a013" /><path d="M0 9h31v18c0 1-1 2-2 2H2c-1 0-2-1-2-2z" fill="#fccf4a" /><path d="M6 29v-6c0-1 1-2 2-2h15c1 0 2 1 2 2v6z" fill="#1379d0" /><path d="M9 24h13v2H9z" fill="#0b5699" /></svg>
        </AppSlot>
        <AppSlot>
          <svg width="31" height="31" viewBox="0 0 31 31">
            <defs><linearGradient id="edge" x1="0" y1="0" x2="1" y2="0.300"><stop offset="0" stopColor="#2aa8e8" /><stop offset="1" stopColor="#5fd65a" /></linearGradient></defs>
            <circle cx="15.500" cy="15.500" r="15" fill="#1267b8" />
            <path d="M.6 15C1 6 8 .5 16 .5c9 0 15 6 15 12.500 0 5-4 7.500-8 7.500-3 0-4.500-1-4-2.500 2-3 0-8-6-8C7 10 2 12 .600 15z" fill="url(#edge)" />
            <path d="M11 12c-4 6-1 15 8 17 4 0 8-3 9.500-6-6 3-13 1.500-14-5-.2-2 .5-4 1.500-5-1-1-3-2-5-1z" fill="#0b468c" />
          </svg>
        </AppSlot>
        <AppSlot><div className="flex h-[31px] w-[30px] items-center justify-center bg-[#1c3fae] text-[20px] font-bold leading-none">L</div></AppSlot>
        <div className="ml-[2px] mt-[5px] flex h-[50px] w-[49px] flex-col items-center rounded-[5px] border border-[#3c3f52] bg-[#2e3145] pt-[9px]">
          <svg width="22" height="30" viewBox="0 0 22 30"><rect x="12" y="0" width="10" height="30" rx="1" fill="#c98b0e" /><rect x="6" y="7" width="10" height="23" rx="1" fill="#e8b21b" /><rect x="0" y="15" width="9" height="15" rx="1" fill="#f9d74b" /></svg>
          <div className="mt-[5px] h-[4px] w-[20px] shrink-0 rounded-full bg-[#2be8ff]" />
        </div>
      </div>
      <svg className="ml-[212px] mt-[26px] shrink-0" width="14" height="9" viewBox="0 0 14 9" fill="none" stroke="#fff" strokeWidth="1.600"><path d="M1 8l6-6.500L13 8" /></svg>
      <svg className="ml-[23px] mt-[21px] shrink-0" width="21" height="20" viewBox="0 0 21 20"><path d="M4 14c-5-1-5-7 0-7.500C5 1 13 0 14.500 6c3 0 4 2 4 4v4z" fill="#bfc3c9" /><circle cx="14.500" cy="13.500" r="6.300" fill="#4cb8f0" /><path d="M14.500 9.500v1.800M14.500 12.500v4.500" stroke="#08314d" strokeWidth="1.600" /></svg>
      <div className="ml-[22px] mt-[10px] flex w-[30px] shrink-0 flex-col items-center text-[13.500px] leading-[20px]">
        <Fit className="w-[29px]">ENG</Fit>
        <Fit className="w-[15px]">IN</Fit>
      </div>
      <svg className="ml-[23px] mt-[21px] shrink-0" width="82" height="18" viewBox="0 0 82 18" fill="none" stroke="#fff" strokeWidth="1.500">
        <path d="M1 6.500c4-4.500 12-4.500 16 0" stroke="#8b8e99" /><path d="M3.500 9.500c3-3.500 8-3.500 11 0M6 12.300c2-2 4-2 6 0" /><circle cx="9" cy="15" r="1.400" fill="#fff" stroke="none" />
        <path d="M30 6.500h3.500l4.500-4v13l-4.500-4H30zM41 6c1.300 1.800 1.300 4.200 0 6M44 3.500c2.800 3 2.800 8 0 11M47 1.500c3.500 4 3.500 11 0 15" strokeWidth="1.300" />
        <rect x="60.500" y="3.500" width="16" height="11" rx="2.500" /><path d="M62.500 5.500h9v7h-9z" fill="#fff" stroke="none" /><path d="M78.800 7v4" strokeWidth="2" />
      </svg>
      <div className="ml-auto mt-[10px] flex shrink-0 flex-col items-end text-[14px] leading-[20px]">
        <Fit className="w-[36px]">11:55</Fit>
        <Fit className="w-[78px]">19-11-2024</Fit>
      </div>
      <svg className="ml-[11px] mr-[26px] mt-[21px] shrink-0" width="17" height="19" viewBox="0 0 17 19" fill="none" stroke="#fff" strokeWidth="1.400" strokeLinejoin="round"><path d="M8.500 1C5 1 3 3.500 3 6.500V11l-2 3.500h15L14 11V6.500C14 3.500 12 1 8.500 1zM6.500 15c.3 3 3.700 3 4 0" /></svg>
    </div>
  );
}

export default function App() {
  return (
    <div className='flex h-[1080px] w-[1920px] flex-col overflow-hidden bg-white font-["Open_Sans","Noto_Sans",sans-serif]'>
      <TitleBar />
      <Ribbon />
      <main className="flex h-[790px] shrink-0">
        <LeftRail />
        <div className="w-[1600px]">
          <div className="flex h-[746px]">
            <div className="h-full w-[1559px] overflow-hidden pl-[220px]">
              <div className="w-[1119px] shadow-[0_0_10px_rgba(0,0,0,0.25)]"><ReportPage /></div>
            </div>
            <aside className="flex w-[41px] flex-col items-center border-l border-[#a19f9d] bg-white pt-[16px]">
              <Chevrons />
              <svg className="ml-[6px] mt-[19px]" width="16" height="16" viewBox="0 0 16 16" fill="none" stroke="#252423" strokeWidth="1.300"><path d="M15 .8v14.400L8.500 9.700H1V6.300h7.500z" /></svg>
              <span className="mt-[10px] text-[17px] font-semibold leading-[20px] tracking-[0.400px] text-[#252423] [writing-mode:vertical-rl]">Filters</span>
            </aside>
          </div>
          <PageTabs />
        </div>
        <aside className="flex w-[43px] flex-col items-center border-l border-[#e1dfdd] bg-[#f3f2f1] pr-px pt-[17px]">
          <Chevrons />
          <span className="-ml-[3px] mt-[18px] text-[17.500px] font-semibold leading-[20px] tracking-[0.600px] text-[#252423] [writing-mode:vertical-rl]">Visualizations</span>
        </aside>
        <DataPane />
      </main>
      <StatusBar />
      <Taskbar />
    </div>
  );
}
